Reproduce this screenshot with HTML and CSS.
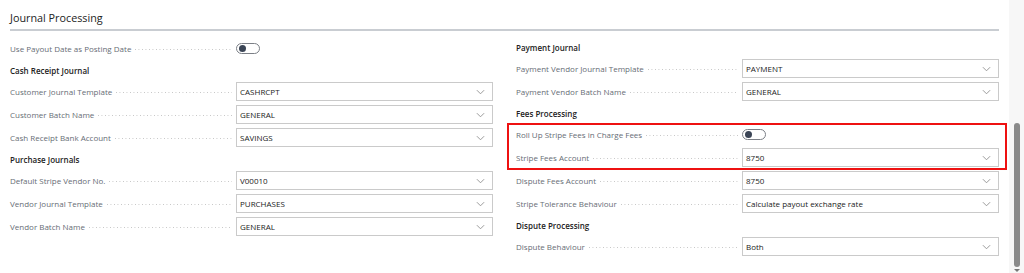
FILE: index.html
```html
<!DOCTYPE html>
<html>
<head>
<meta charset="utf-8">
<link rel="stylesheet" href="styles.css">
</head>
<body>
<div class="app">
  <main class="main">
    <h2 class="title">Journal Processing</h2>
    <div class="cols">
      <div class="col">
        <div class="row">
          <span class="label">Use Payout Date as Posting Date</span><span class="dots"></span>
          <div class="ctrl"><span class="toggle"><span class="knob"></span></span></div>
        </div>
        <div class="group">Cash Receipt Journal</div>
        <div class="row">
          <span class="label">Customer Journal Template</span><span class="dots"></span>
          <div class="ctrl"><div class="select"><span>CASHRCPT</span><svg class="chev" viewBox="0 0 10 6"><path d="M1 1l4 4 4-4"/></svg></div></div>
        </div>
        <div class="row">
          <span class="label">Customer Batch Name</span><span class="dots"></span>
          <div class="ctrl"><div class="select"><span>GENERAL</span><svg class="chev" viewBox="0 0 10 6"><path d="M1 1l4 4 4-4"/></svg></div></div>
        </div>
        <div class="row">
          <span class="label">Cash Receipt Bank Account</span><span class="dots"></span>
          <div class="ctrl"><div class="select"><span>SAVINGS</span><svg class="chev" viewBox="0 0 10 6"><path d="M1 1l4 4 4-4"/></svg></div></div>
        </div>
        <div class="group">Purchase Journals</div>
        <div class="row">
          <span class="label">Default Stripe Vendor No.</span><span class="dots"></span>
          <div class="ctrl"><div class="select"><span>V00010</span><svg class="chev" viewBox="0 0 10 6"><path d="M1 1l4 4 4-4"/></svg></div></div>
        </div>
        <div class="row">
          <span class="label">Vendor Journal Template</span><span class="dots"></span>
          <div class="ctrl"><div class="select"><span>PURCHASES</span><svg class="chev" viewBox="0 0 10 6"><path d="M1 1l4 4 4-4"/></svg></div></div>
        </div>
        <div class="row">
          <span class="label">Vendor Batch Name</span><span class="dots"></span>
          <div class="ctrl"><div class="select"><span>GENERAL</span><svg class="chev" viewBox="0 0 10 6"><path d="M1 1l4 4 4-4"/></svg></div></div>
        </div>
      </div>
      <div class="col">
        <div class="group">Payment Journal</div>
        <div class="row">
          <span class="label">Payment Vendor Journal Template</span><span class="dots"></span>
          <div class="ctrl"><div class="select"><span>PAYMENT</span><svg class="chev" viewBox="0 0 10 6"><path d="M1 1l4 4 4-4"/></svg></div></div>
        </div>
        <div class="row">
          <span class="label">Payment Vendor Batch Name</span><span class="dots"></span>
          <div class="ctrl"><div class="select"><span>GENERAL</span><svg class="chev" viewBox="0 0 10 6"><path d="M1 1l4 4 4-4"/></svg></div></div>
        </div>
        <div class="group">Fees Processing</div>
        <div class="highlight">
          <div class="row">
            <span class="label">Roll Up Stripe Fees in Charge Fees</span><span class="dots"></span>
            <div class="ctrl"><span class="toggle"><span class="knob"></span></span></div>
          </div>
          <div class="row">
            <span class="label">Stripe Fees Account</span><span class="dots"></span>
            <div class="ctrl"><div class="select"><span>8750</span><svg class="chev" viewBox="0 0 10 6"><path d="M1 1l4 4 4-4"/></svg></div></div>
          </div>
        </div>
        <div class="row">
          <span class="label">Dispute Fees Account</span><span class="dots"></span>
          <div class="ctrl"><div class="select"><span>8750</span><svg class="chev" viewBox="0 0 10 6"><path d="M1 1l4 4 4-4"/></svg></div></div>
        </div>
        <div class="row">
          <span class="label">Stripe Tolerance Behaviour</span><span class="dots"></span>
          <div class="ctrl"><div class="select"><span>Calculate payout exchange rate</span><svg class="chev" viewBox="0 0 10 6"><path d="M1 1l4 4 4-4"/></svg></div></div>
        </div>
        <div class="group">Dispute Processing</div>
        <div class="row">
          <span class="label">Dispute Behaviour</span><span class="dots"></span>
          <div class="ctrl"><div class="select"><span>Both</span><svg class="chev" viewBox="0 0 10 6"><path d="M1 1l4 4 4-4"/></svg></div></div>
        </div>
      </div>
    </div>
  </main>
  <div class="scrollbar">
    <div class="thumb"></div>
    <div class="arrow"></div>
  </div>
</div>
</body>
</html>
```

FILE: styles.css
```css
* { box-sizing: border-box; }
html, body { margin: 0; padding: 0; background: #fff; }
body {
  font-family: "Open Sans", "Noto Sans", sans-serif;
  color: #212121;
  overflow: hidden;
}
.app {
  display: flex;
  width: 1024px;
  height: 273px;
}
.main {
  width: 1009px;
  padding: 0 10px;
}
.title {
  margin: 0;
  padding-top: 8px;
  padding-bottom: 1px;
  font-size: 10.8px;
  line-height: 20px;
  font-weight: 400;
  color: #222;
  border-bottom: 2px solid #c9cdd2;
}
.cols {
  display: grid;
  grid-template-columns: 483px 483px;
  column-gap: 23px;
  margin-top: 6px;
}
.col {
  display: flex;
  flex-direction: column;
}
.group {
  height: 20px;
  display: flex;
  align-items: center;
  font-size: 8px;
  font-weight: 600;
  color: #222;
}
.row {
  height: 23px;
  display: flex;
  align-items: center;
}
.label {
  font-size: 8px;
  color: #676d75;
  white-space: nowrap;
  padding-right: 4px;
}
.dots {
  flex: 1;
  height: 1px;
  margin-top: 2px;
  margin-right: 4px;
  background-image: linear-gradient(to right, #c4c4c4 1px, transparent 1px);
  background-size: 3.5px 1px;
  background-repeat: repeat-x;
}
.ctrl {
  width: 257px;
  flex: none;
  display: flex;
  align-items: center;
}
.select {
  width: 257px;
  height: 19px;
  border: 1px solid #cacaca;
  display: flex;
  align-items: center;
  justify-content: space-between;
  padding: 0 7px 0 3px;
  font-size: 8px;
  color: #222;
}
.chev {
  width: 9px;
  height: 6px;
  fill: none;
  stroke: #8f8f8f;
  stroke-width: 1;
}
.toggle {
  width: 24px;
  height: 11px;
  border: 1px solid #7b7f86;
  border-radius: 6px;
  display: flex;
  align-items: center;
  padding-left: 2px;
}
.knob {
  width: 7px;
  height: 7px;
  border-radius: 50%;
  background: #3b4556;
}
.highlight {
  position: relative;
}
.highlight::after {
  content: "";
  position: absolute;
  left: -9px;
  right: -8px;
  top: 0;
  bottom: -1px;
  border: 2px solid #ee1111;
  pointer-events: none;
}
.scrollbar {
  width: 15px;
  background: #f7f7f7;
  position: relative;
  display: flex;
  flex-direction: column;
  align-items: center;
  padding-top: 123px;
}
.thumb {
  width: 6px;
  height: 144px;
  background: #8a8a8a;
  border-radius: 3px;
}
.arrow {
  margin-top: 2px;
  width: 0;
  height: 0;
  border-left: 3px solid transparent;
  border-right: 3px solid transparent;
  border-top: 3px solid #777;
}
```
